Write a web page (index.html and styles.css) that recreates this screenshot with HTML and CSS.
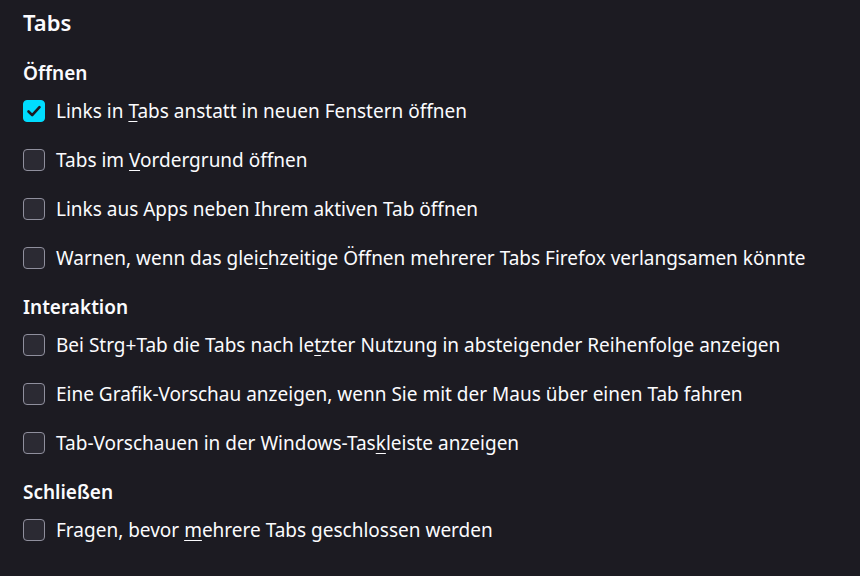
FILE: index.html
```html
<!DOCTYPE html>
<html lang="de">
<head>
<meta charset="utf-8">
<link rel="stylesheet" href="styles.css">
</head>
<body>
<main class="pane">
  <h1 class="title">Tabs</h1>

  <section class="group">
    <h2 class="group-head">Öffnen</h2>
    <label class="row"><span class="box checked"><svg viewBox="0 0 22 22" width="22" height="22"><path d="M5.5 11.5 L9.2 15.2 L16.5 7.2" fill="none" stroke="#1c1b22" stroke-width="2.6" stroke-linecap="round" stroke-linejoin="round"/></svg></span><span class="text">Links in <u>T</u>abs anstatt in neuen Fenstern öffnen</span></label>
    <label class="row"><span class="box"></span><span class="text">Tabs im <u>V</u>ordergrund öffnen</span></label>
    <label class="row"><span class="box"></span><span class="text">Links aus Apps neben Ihrem aktiven Tab öffnen</span></label>
    <label class="row"><span class="box"></span><span class="text">Warnen, wenn das glei<u>c</u>hzeitige Öffnen mehrerer Tabs Firefox verlangsamen könnte</span></label>
  </section>

  <section class="group">
    <h2 class="group-head">Interaktion</h2>
    <label class="row"><span class="box"></span><span class="text">Bei Strg+Tab die Tabs nach le<u>t</u>zter Nutzung in absteigender Reihenfolge anzeigen</span></label>
    <label class="row"><span class="box"></span><span class="text">Eine Grafik-Vorschau anzeigen, wenn Sie mit der Maus über einen Tab fahren</span></label>
    <label class="row"><span class="box"></span><span class="text">Tab-Vorschauen in der Windows-Tas<u>k</u>leiste anzeigen</span></label>
  </section>

  <section class="group">
    <h2 class="group-head">Schließen</h2>
    <label class="row"><span class="box"></span><span class="text">Fragen, bevor <u>m</u>ehrere Tabs geschlossen werden</span></label>
  </section>
</main>
</body>
</html>
```

FILE: styles.css
```css
html, body {
  margin: 0;
  padding: 0;
  background: #1c1b22;
}
body {
  color: #fbfbfe;
  font-family: "Noto Sans", "Open Sans", sans-serif;
  font-size: 19px;
}
.pane {
  display: flex;
  flex-direction: column;
  padding: 6px 23px 0 23px;
}
.title {
  margin: 0 0 10px;
  font-size: 22px;
  font-weight: 600;
  line-height: 32px;
}
.group {
  display: flex;
  flex-direction: column;
  margin-top: 12px;
}
.group-head {
  margin: 0;
  font-size: 19px;
  font-weight: 600;
  line-height: 26px;
}
.row {
  display: flex;
  align-items: center;
  gap: 11px;
  height: 49px;
}
.box {
  flex: none;
  width: 20px;
  height: 20px;
  border: 1px solid #8f8f9d;
  border-radius: 4px;
  background: #2b2a33;
  display: flex;
}
.box.checked {
  border-color: #00ddff;
  background: #00ddff;
}
.box svg {
  margin: -1px;
}
.text u {
  text-decoration-thickness: 1px;
  text-underline-offset: 3px;
}
```
